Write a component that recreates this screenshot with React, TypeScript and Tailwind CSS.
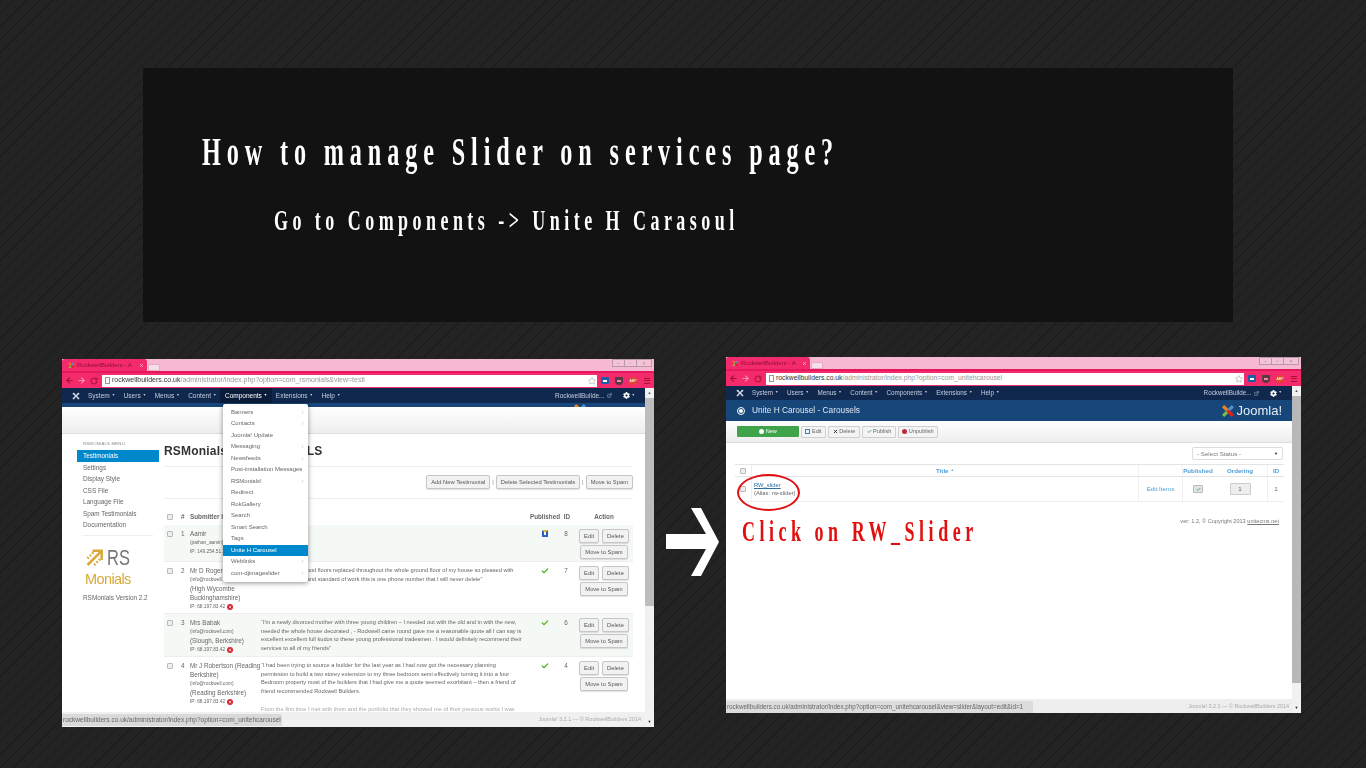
import { ArrowLeft, ArrowRight, Check as CheckIcon, ChevronRight, ExternalLink, RotateCw, Star, X } from "lucide-react";
import { FaCog } from "react-icons/fa";

const SERIF = "font-['Liberation_Serif',serif]";

function JoomlaMark({ className }: { className: string }) {
  return (
    <svg viewBox="0 0 20 20" className={className} fill="none" strokeWidth="3.4" strokeLinecap="round">
      <path d="M5 5 L14 14" stroke="currentColor" />
      <path d="M15 5 L6 14" stroke="currentColor" />
      <circle cx="4" cy="4" r="2.4" fill="currentColor" />
      <circle cx="16" cy="4" r="2.4" fill="currentColor" />
      <circle cx="4" cy="16" r="2.4" fill="currentColor" />
      <circle cx="16" cy="16" r="2.4" fill="currentColor" />
    </svg>
  );
}

function ColorMark({ className }: { className: string }) {
  return (
    <svg viewBox="0 0 20 20" className={className} fill="none" strokeWidth="4.5">
      <path d="M3 3 L11 11" stroke="#f58220" />
      <path d="M17 3 L9 11" stroke="#5091cd" />
      <path d="M3 17 L11 9" stroke="#7ac143" />
      <path d="M17 17 L9 9" stroke="#e2231a" />
    </svg>
  );
}

function BrowserBars({ url, urlText, tabW }: { url: string; urlText: string; tabW: string }) {
  return (
    <>
      <div className="h-[12px] bg-[#f6b8d3] flex items-end relative">
        <div className={"h-[12px] bg-[#f32a6c] rounded-t-[3px] flex items-center pl-[6px] text-[6px] text-[#8f1233] whitespace-nowrap " + tabW}>
          <ColorMark className="w-[7px] h-[7px] shrink-0 mr-[2px]" />
          <span>RockwellBuilders - A</span>
          <X className="ml-auto mr-[3px] w-[5px] h-[5px] text-[#fbd0de]" strokeWidth={3} />
        </div>
        <div className="ml-[1px] w-[12px] h-[7px] bg-[#f6dfe8] rounded-t-[2px] border border-[#e9a9c3]" />
        <div className="absolute right-[2px] top-0 flex h-[8px] border border-[#b79aa8] bg-[#f5c3d8] text-[#a08b95] text-[5px] leading-[6px] text-center">
          <div className="w-[12px] border-r border-[#b79aa8]">–</div>
          <div className="w-[12px] border-r border-[#b79aa8]">▫</div>
          <div className="w-[14px]">×</div>
        </div>
      </div>
      <div className="h-[17px] bg-[#f32a6c] flex items-center border-t-[2px] border-[#e6175c]">
        <ArrowLeft className="w-[9px] h-[9px] ml-[3px] text-[#a7122f]" strokeWidth={3} />
        <ArrowRight className="w-[9px] h-[9px] ml-[3px] text-[#f890ad]" strokeWidth={3} />
        <RotateCw className="w-[8px] h-[8px] ml-[4px] text-[#a7122f]" strokeWidth={3} />
        <div className="ml-[4px] flex-1 h-[12px] bg-white flex items-center pl-[3px] text-[#999] whitespace-nowrap overflow-hidden">
          <span className="w-[5px] h-[7px] border border-[#999] mr-[2px] shrink-0" />
          <span className={urlText}>
            <span className="text-[#333]">rockwellbuilders.co.uk</span>
            {url}
          </span>
          <Star className="ml-auto mr-[1px] w-[8px] h-[8px] text-[#aaa]" />
        </div>
        <div className="w-[57px] shrink-0 flex items-center gap-[6px] pl-[4px]">
          <div className="w-[8px] h-[7px] bg-[#1c5fa8] rounded-[1px] flex items-center justify-center">
            <span className="w-[4px] h-[2px] bg-white" />
          </div>
          <div className="w-[8px] h-[8px] bg-[#5a3a44] rounded-b-[4px] flex items-center justify-center">
            <span className="w-[4px] h-[2px] bg-[#f48aa8]" />
          </div>
          <div className="w-[8px] h-[8px] bg-[#dc4a2c] rounded-full text-[3.5px] text-white text-center leading-[8px]">ABP</div>
          <div className="w-[6px] h-[6px] ml-[1px] border-y border-[#a7122f] flex items-center">
            <div className="w-full h-px bg-[#a7122f]" />
          </div>
        </div>
      </div>
    </>
  );
}

function AdminNav({ open, h, text }: { open?: boolean; h: string; text: string }) {
  const items = ["System", "Users", "Menus", "Content", "Components", "Extensions", "Help"];
  return (
    <div className={"bg-[#10284e] flex items-center text-[#c4cede] whitespace-nowrap shrink-0 " + h + " " + text}>
      <JoomlaMark className="w-[8px] h-[8px] ml-[10px] mr-[3.5px] text-[#d6dce6]" />
      {items.map((it) => (
        <div
          key={it}
          className={
            open && it === "Components"
              ? "h-full flex items-center px-[5px] -mx-[0.5px] bg-[#0a1c3a] text-white"
              : "h-full flex items-center px-[4.5px]"
          }
        >
          {it}
          <span className="ml-[2px] w-[3px] text-[3.5px] leading-none">▼</span>
        </div>
      ))}
      <div className="ml-auto flex items-center pr-[10px]">
        RockwellBuilde...
        <ExternalLink className="ml-[2px] mr-[11px] w-[5px] h-[5px]" />
        <FaCog className="w-[7px] h-[7px] text-white" />
        <span className="ml-[2px] text-[3.5px] leading-none">▼</span>
      </div>
    </div>
  );
}

function Scrollbar({ thumb }: { thumb: string }) {
  return (
    <div className="w-[9px] bg-[#f1f1f1] flex flex-col shrink-0">
      <div className="h-[10px] text-[4px] text-[#555] text-center leading-[10px]">▲</div>
      <div className={thumb} />
      <div className="mt-auto h-[10px] text-[4px] text-[#222] text-center leading-[10px]">▼</div>
    </div>
  );
}

function Btn({ children }: { children: React.ReactNode }) {
  return (
    <div className="h-[14px] px-[4px] flex items-center justify-center rounded-[2px] border border-[#c6c6c6] bg-[#f2f2f2] shadow-[0_1px_1px_rgba(0,0,0,0.12)] text-[5.8px] text-[#555] whitespace-nowrap">
      {children}
    </div>
  );
}

function ToolBtn({ w, children }: { w: string; children: React.ReactNode }) {
  return (
    <div className={"h-[12px] flex items-center justify-center gap-[1.5px] rounded-[1px] border border-[#cfcfcf] bg-[#f4f4f4] text-[5.6px] text-[#666] whitespace-nowrap " + w}>
      {children}
    </div>
  );
}

function Box() {
  return <div className="w-[6px] h-[6px] border border-[#bbb] bg-[#eee] rounded-[1px] shrink-0" />;
}

const sideItems = ["Settings", "Display Style", "CSS File", "Language File", "Spam Testimonials", "Documentation"];

const menuItems: [string, boolean][] = [
  ["Banners", true],
  ["Contacts", true],
  ["Joomla! Update", false],
  ["Messaging", true],
  ["Newsfeeds", true],
  ["Post-installation Messages", false],
  ["RSMonials!", true],
  ["Redirect", false],
  ["RokGallery", false],
  ["Search", false],
  ["Smart Search", false],
  ["Tags", false],
  ["Unite H Carousel", false],
  ["Weblinks", true],
  ["com-djimageslider", true],
];

type Row = {
  n: string;
  name: string[];
  email: string;
  place?: string[];
  ip: string;
  quote: string[];
  ok: boolean;
  id: string;
  h: string;
  tint: boolean;
};

const rows: Row[] = [
  {
    n: "1",
    name: ["Aamir"],
    email: "(pathan_aamir@...",
    ip: "IP: 149.254.51.2",
    quote: [],
    ok: false,
    id: "8",
    h: "h-[37px]",
    tint: true,
  },
  {
    n: "2",
    name: ["Mr D Rogers"],
    email: "(info@rockwell.com)",
    place: ["(High Wycombe", "Buckinghamshire)"],
    ip: "IP: 68.197.83.42",
    quote: [
      "“I have had new wood floors replaced throughout the whole ground floor of my house so pleased with",
      "the finish, respect and standard of work this is one phone number that I will never delete”",
    ],
    ok: true,
    id: "7",
    h: "h-[52px]",
    tint: false,
  },
  {
    n: "3",
    name: ["Mrs Babak"],
    email: "(info@rockwell.com)",
    place: ["(Slough, Berkshire)"],
    ip: "IP: 68.197.83.42",
    quote: [
      "“I'm a newly divorced mother with three young children – I needed out with the old and in with the new,",
      "needed the whole house decorated , - Rockwell came round gave me a reasonable quote all I can say is",
      "excellent excellent full kudos to these young professional tradesmen . I would definitely recommend their",
      "services to all of my friends”",
    ],
    ok: true,
    id: "6",
    h: "h-[43px]",
    tint: true,
  },
  {
    n: "4",
    name: ["Mr J Robertson (Reading", "Berkshire)"],
    email: "(info@rockwell.com)",
    place: ["(Reading Berkshire)"],
    ip: "IP: 68.197.83.42",
    quote: [
      "“I had been trying to source a builder for the last year as I had now got the necessary planning",
      "permission to build a two storey extension to my three bedroom semi effectively turning it into a four",
      "Bedroom property most of the builders that I had give me a quote seemed exorbitant – then a friend of",
      "friend recommended Rockwell Builders.",
    ],
    ok: true,
    id: "4",
    h: "h-[60px]",
    tint: false,
  },
];

function LeftWindow() {
  return (
    <div className="w-[592px] h-[368px] mt-[2px] bg-white flex flex-col overflow-hidden relative blur-[0.3px]">
      <BrowserBars tabW="w-[85px]" urlText="text-[7px]" url="/administrator/index.php?option=com_rsmonials&view=testi" />
      <div className="flex-1 flex min-h-0">
        <div className="flex-1 min-w-0 flex flex-col relative">
          <AdminNav open h="h-[15px]" text="text-[6.5px]" />
          <div className="h-[4px] bg-[#17467a] shrink-0 overflow-hidden pl-[511px]">
            <ColorMark className="w-[14px] h-[14px]" />
          </div>
          <div className="h-[27px] shrink-0 bg-gradient-to-b from-white to-[#eeeeee] border-b border-[#dddddd]" />
          <div className="flex-1 flex min-h-0 overflow-hidden pl-[15px] pr-[12px]">
            <div className="w-[82px] pt-[6px] shrink-0 text-[6.4px] text-[#666]">
              <div className="text-[4.3px] tracking-[0.2px] leading-[8px] text-[#888] pl-[6px] h-[10px] whitespace-nowrap">RSMONIALS MENU</div>
              <div className="h-[11.5px] bg-[#0088cc] text-white flex items-center pl-[6px]">Testimonials</div>
              {sideItems.map((s) => (
                <div key={s} className="h-[11.5px] flex items-center pl-[6px] pt-[1px]">{s}</div>
              ))}
              <div className="h-px bg-[#eeeeee] mt-[4px] mx-[6px]" />
              <div className="pl-[6px] pt-[11px]">
                <div className="flex items-center gap-[2px] ml-[2px]">
                  <svg viewBox="0 0 24 24" className="w-[20px] h-[21px]" fill="none" stroke="#d9a838" strokeWidth="3">
                    <path d="M3 21 L20 4 M9 4 H20 V15" />
                    <path d="M3 13 L11 5 M11 21 L19 13" strokeDasharray="2 2" />
                  </svg>
                  <span className="origin-left scale-x-[0.75] text-[22px] leading-none text-[#777]">RS</span>
                </div>
                <div className="ml-[2px] mt-[2px] text-[14.5px] leading-[17px] tracking-[-0.6px] text-[#d9a838]">Monials</div>
                <div className="mt-[6px] text-[6.4px] leading-[8px] text-[#666] whitespace-nowrap">RSMonials Version 2.2</div>
              </div>
            </div>
            <div className="flex-1 min-w-0 pl-[5px] flex flex-col">
              <div className="h-[33px] shrink-0 pt-[10px] border-b border-[#eeeeee] text-[12px] leading-[14px] tracking-[0.2px] font-bold text-[#333] whitespace-nowrap">
                RSMonials TESTIMONIALS
              </div>
              <div className="h-[32px] shrink-0 border-b border-[#eeeeee] flex items-center justify-end pb-[1px]">
                <Btn>Add New Testimonial</Btn>
                <span className="mx-[2px] text-[6px] text-[#888]">|</span>
                <Btn>Delete Selected Testimonials</Btn>
                <span className="mx-[2px] text-[6px] text-[#888]">|</span>
                <Btn>Move to Spam</Btn>
              </div>
              <div className="h-[26px] shrink-0 pt-[10px] flex items-center text-[6.3px] font-bold text-[#666]">
                <div className="pl-[3px] w-[17px] shrink-0"><Box /></div>
                <div className="w-[9px] shrink-0">#</div>
                <div className="flex-1 whitespace-nowrap">Submitter Info</div>
                <div className="w-[24px] shrink-0 flex justify-center whitespace-nowrap">Published</div>
                <div className="w-[18px] shrink-0 text-center pl-[2px]">ID</div>
                <div className="w-[58px] shrink-0 text-center">Action</div>
              </div>
              {rows.map((r) => (
                <div
                  key={r.n}
                  className={
                    "flex items-start pt-[4px] shrink-0 border-b border-[#eeeeee] text-[#666] " +
                    r.h +
                    (r.tint ? " bg-[#f5f9f5]" : "")
                  }
                >
                  <div className="pl-[3px] w-[17px] pt-[2px] shrink-0"><Box /></div>
                  <div className="w-[9px] text-[6.4px] leading-[9px] shrink-0">{r.n}</div>
                  <div className="w-[71px] shrink-0 text-[6.3px] leading-[9px] whitespace-nowrap">
                    {r.name.map((l) => <div key={l}>{l}</div>)}
                    <div className="text-[4.8px]">{r.email}</div>
                    {r.place?.map((l) => <div key={l}>{l}</div>)}
                    <div className="text-[4.8px] flex items-center gap-[1px]">
                      {r.ip}
                      {r.n !== "1" && (
                        <span className="w-[6px] h-[6px] ml-[1px] rounded-full bg-[#d9232e] flex items-center justify-center">
                          <X className="w-[4px] h-[4px] text-white" strokeWidth={4} />
                        </span>
                      )}
                    </div>
                  </div>
                  <div className="flex-1 min-w-0 text-[5.65px] leading-[8.7px] whitespace-nowrap">
                    {r.quote.map((l) => <div key={l}>{l}</div>)}
                    {r.n === "4" && (
                      <div className="pt-[8.7px] text-[#aaa]">
                        From the first time I met with them and the portfolio that they showed me of their previous works I was
                      </div>
                    )}
                  </div>
                  <div className="w-[24px] flex justify-center pt-[1px] shrink-0">
                    {r.ok ? (
                      <CheckIcon className="w-[8px] h-[8px] text-[#5fb62a]" strokeWidth={4} />
                    ) : (
                      <span className="w-[6px] h-[7px] border-2 border-[#2a5fc0] border-t-[#e5b92c] rounded-[1px]" />
                    )}
                  </div>
                  <div className="w-[18px] text-center text-[6.3px] leading-[9px] shrink-0">{r.id}</div>
                  <div className="w-[58px] shrink-0 flex flex-col items-center gap-[2px]">
                    <div className="flex gap-[3px]"><Btn>Edit</Btn><Btn>Delete</Btn></div>
                    <Btn>Move to Spam</Btn>
                  </div>
                </div>
              ))}
            </div>
          </div>
          <div className="h-[15px] shrink-0 bg-[#f0f0f0] flex items-center justify-end pr-[4px] text-[5.5px] text-[#aaa]">
            Joomla! 3.2.1 — © RockwellBuilders 2014
          </div>
          {/* open Components menu */}
          <div className="absolute left-[161px] top-[16px] w-[85px] bg-white rounded-[2px] shadow-[0_1px_5px_rgba(0,0,0,0.45)] pt-[2.5px] pb-[2.5px] text-[6px] text-[#666]">
            {menuItems.map(([label, sub]) => (
              <div
                key={label}
                className={
                  label === "Unite H Carousel"
                    ? "h-[11.5px] pl-[8px] pr-[3px] flex items-center justify-between whitespace-nowrap bg-[#0088cc] text-white"
                    : "h-[11.5px] pl-[8px] pr-[3px] flex items-center justify-between whitespace-nowrap"
                }
              >
                {label}
                {sub && <ChevronRight className="w-[5px] h-[5px] text-[#aaa]" />}
              </div>
            ))}
          </div>
        </div>
        <Scrollbar thumb="h-[208px] bg-[#bdbdbd]" />
      </div>
      <div className="absolute left-0 bottom-[1px] h-[12px] w-[220px] bg-[#d9d9d9] rounded-tr-[2px] flex items-center pl-[1px] text-[6.55px] text-[#666] whitespace-nowrap overflow-hidden">
        rockwellbuilders.co.uk/administrator/index.php?option=com_unitehcarousel
      </div>
    </div>
  );
}

function RightWindow() {
  return (
    <div className="w-[575px] h-[356px] bg-white flex flex-col overflow-hidden relative">
      <div className="blur-[0.3px] flex-1 flex flex-col min-h-0">
        <BrowserBars tabW="w-[84px]" urlText="text-[6.8px]" url="/administrator/index.php?option=com_unitehcarousel" />
        <div className="flex-1 flex min-h-0">
          <div className="flex-1 min-w-0 flex flex-col">
            <AdminNav h="h-[14px]" text="text-[6.3px]" />
            <div className="h-[21px] shrink-0 bg-[#17467a] flex items-center text-white">
              <span className="ml-[11px] w-[8px] h-[8px] rounded-full border border-white flex items-center justify-center">
                <span className="w-[4px] h-[4px] rounded-full bg-white" />
              </span>
              <span className="ml-[7px] text-[8.3px] text-[#dfe6ef]">Unite H Carousel - Carousels</span>
              <div className="ml-auto pr-[10px] flex items-center gap-[1px]">
                <ColorMark className="w-[14px] h-[14px]" />
                <span className="text-[13px] leading-none text-[#e6edf4]">Joomla!</span>
              </div>
            </div>
            <div className="h-[22px] shrink-0 bg-gradient-to-b from-white to-[#eeeeee] border-b border-[#ddd] flex items-center gap-[2px] pl-[11px]">
              <div className="w-[62px] h-[11px] rounded-[1px] bg-[#3fa34a] text-white text-[5.6px] flex items-center justify-center gap-[1.5px]">
                <span className="w-[5px] h-[5px] bg-white rounded-full" />New
              </div>
              <ToolBtn w="w-[25px]"><span className="w-[5px] h-[5px] border border-[#3a7fc0]" />Edit</ToolBtn>
              <ToolBtn w="w-[32px]"><X className="w-[5px] h-[5px] text-[#222]" strokeWidth={4} />Delete</ToolBtn>
              <ToolBtn w="w-[34px]"><CheckIcon className="w-[5px] h-[5px] text-[#3fa34a]" strokeWidth={4} />Publish</ToolBtn>
              <ToolBtn w="w-[40px]"><span className="w-[5px] h-[5px] rounded-full bg-[#c4283a]" />Unpublish</ToolBtn>
            </div>
            <div className="pl-[9px] pr-[8px] flex-1 flex flex-col min-h-0">
              <div className="flex justify-end pt-[4px] h-[21px] shrink-0 pr-[1px]">
                <div className="w-[91px] h-[13px] border border-[#ddd] rounded-[2px] flex items-center justify-between px-[4px] text-[6.2px] text-[#777]">
                  - Select Status -<span className="text-[4px] text-[#222]">▼</span>
                </div>
              </div>
              <div className="h-[13px] shrink-0 border-y border-[#e4e4e4] flex items-center text-[6.2px] font-bold text-[#4f9fd6]">
                <div className="w-[16px] h-full flex items-center pl-[5px]"><Box /></div>
                <div className="w-[387px] h-full flex items-center justify-center border-l border-[#f0f0f0]">
                  Title<span className="ml-[2px] text-[3.5px]">▲</span>
                </div>
                <div className="w-[44px] h-full border-l border-[#f0f0f0]" />
                <div className="w-[31px] h-full flex items-center justify-center border-l border-[#f0f0f0]">Published</div>
                <div className="w-[54px] h-full flex items-center justify-center">Ordering</div>
                <div className="flex-1 h-full flex items-center justify-center border-l border-[#f0f0f0]">ID</div>
              </div>
              <div className="h-[25px] shrink-0 border-b border-[#eeeeee] flex items-center text-[#666]">
                <div className="w-[16px] h-full flex items-center pl-[5px]"><Box /></div>
                <div className="w-[387px] h-full flex flex-col justify-center text-[5.8px] leading-[8.5px] pl-[2px] border-l border-[#f0f0f0]">
                  <div className="text-[#2f6f9f] underline">RW_slider</div>
                  <div>(Alias: rw-slider)</div>
                </div>
                <div className="w-[44px] h-full flex items-center justify-center text-[6.2px] text-[#4f9fd6] border-l border-[#f0f0f0]">Edit Items</div>
                <div className="w-[31px] h-full flex items-center justify-center border-l border-[#f0f0f0]">
                  <div className="w-[10px] h-[8px] bg-[#e4e4e4] border border-[#bbb] rounded-[1px] flex items-center justify-center">
                    <CheckIcon className="w-[5px] h-[5px] text-[#3fa34a]" strokeWidth={4} />
                  </div>
                </div>
                <div className="w-[54px] flex justify-center">
                  <div className="w-[21px] h-[12px] bg-[#eeeeee] border border-[#ccc] rounded-[1px] text-[6.2px] text-center leading-[10px]">1</div>
                </div>
                <div className="flex-1 h-full flex items-center justify-center text-[6.2px] border-l border-[#f0f0f0]">1</div>
              </div>
              <div className="flex justify-end pt-[15px] pr-[5px] text-[5.6px] leading-[8px] text-[#777] whitespace-nowrap">
                ver: 1.2, © Copyright 2013&nbsp;<span className="underline">unitecms.net</span>
              </div>
            </div>
            <div className="h-[14px] shrink-0 bg-[#eeeeee] flex items-center justify-end pr-[3px] text-[5.4px] text-[#aaa]">
              Joomla! 3.2.1 — © RockwellBuilders 2014
            </div>
          </div>
          <Scrollbar thumb="h-[287px] bg-[#b8b8b8]" />
        </div>
        <div className="absolute left-0 bottom-0 h-[12px] w-[307px] bg-[#dcdcdc] rounded-tr-[2px] flex items-center pl-[1px] text-[6.3px] text-[#666] whitespace-nowrap overflow-hidden">
          rockwellbuilders.co.uk/administrator/index.php?option=com_unitehcarousel&view=slider&layout=edit&id=1
        </div>
      </div>
      {/* red circle and label drawn over the screenshot */}
      <div className="absolute left-[11px] top-[117px] w-[63px] h-[37px] rounded-[50%] border-[2px] border-[#e01010]" />
      <div className={`absolute left-[16px] top-[159px] origin-left scale-x-[0.62] text-[29px] leading-[30px] tracking-[7.3px] font-bold text-[#e01010] whitespace-nowrap ${SERIF}`}>
        Click on RW_Slider
      </div>
    </div>
  );
}

export default function App() {
  return (
    <div className="w-[1366px] h-[768px] overflow-hidden bg-[#232323] bg-[linear-gradient(135deg,#191919_0%,#191919_5%,transparent_5%,transparent_50%,#191919_50%,#191919_55%,transparent_55%,transparent_100%)] bg-[size:13px_13px] flex flex-col font-['Liberation_Sans',sans-serif]">
      <div className={`ml-[143px] mt-[68px] w-[1090px] h-[254px] shrink-0 bg-[#111111]/90 text-white font-bold ${SERIF}`}>
        <div className="ml-[59px] pt-[62px] origin-left scale-x-[0.62] text-[39px] leading-[44px] tracking-[9.5px] whitespace-nowrap">How to manage Slider on services page?</div>
        <div className="ml-[131px] pt-[31px] origin-left scale-x-[0.62] text-[29px] leading-[30px] tracking-[7.2px] whitespace-nowrap">Go to Components -&gt; Unite H Carasoul</div>
      </div>
      <div className="mt-[35px] pl-[62px] flex items-start">
        <LeftWindow />
        <div className="w-[72px] pt-[151px] pl-[12px]">
          <svg viewBox="0 0 54 69" className="w-[54px] h-[69px]" fill="white">
            <polygon points="0,26 40,26 25,0 35,0 53,34 35,68 25,68 40,41 0,41" />
          </svg>
        </div>
        <RightWindow />
      </div>
    </div>
  );
}
